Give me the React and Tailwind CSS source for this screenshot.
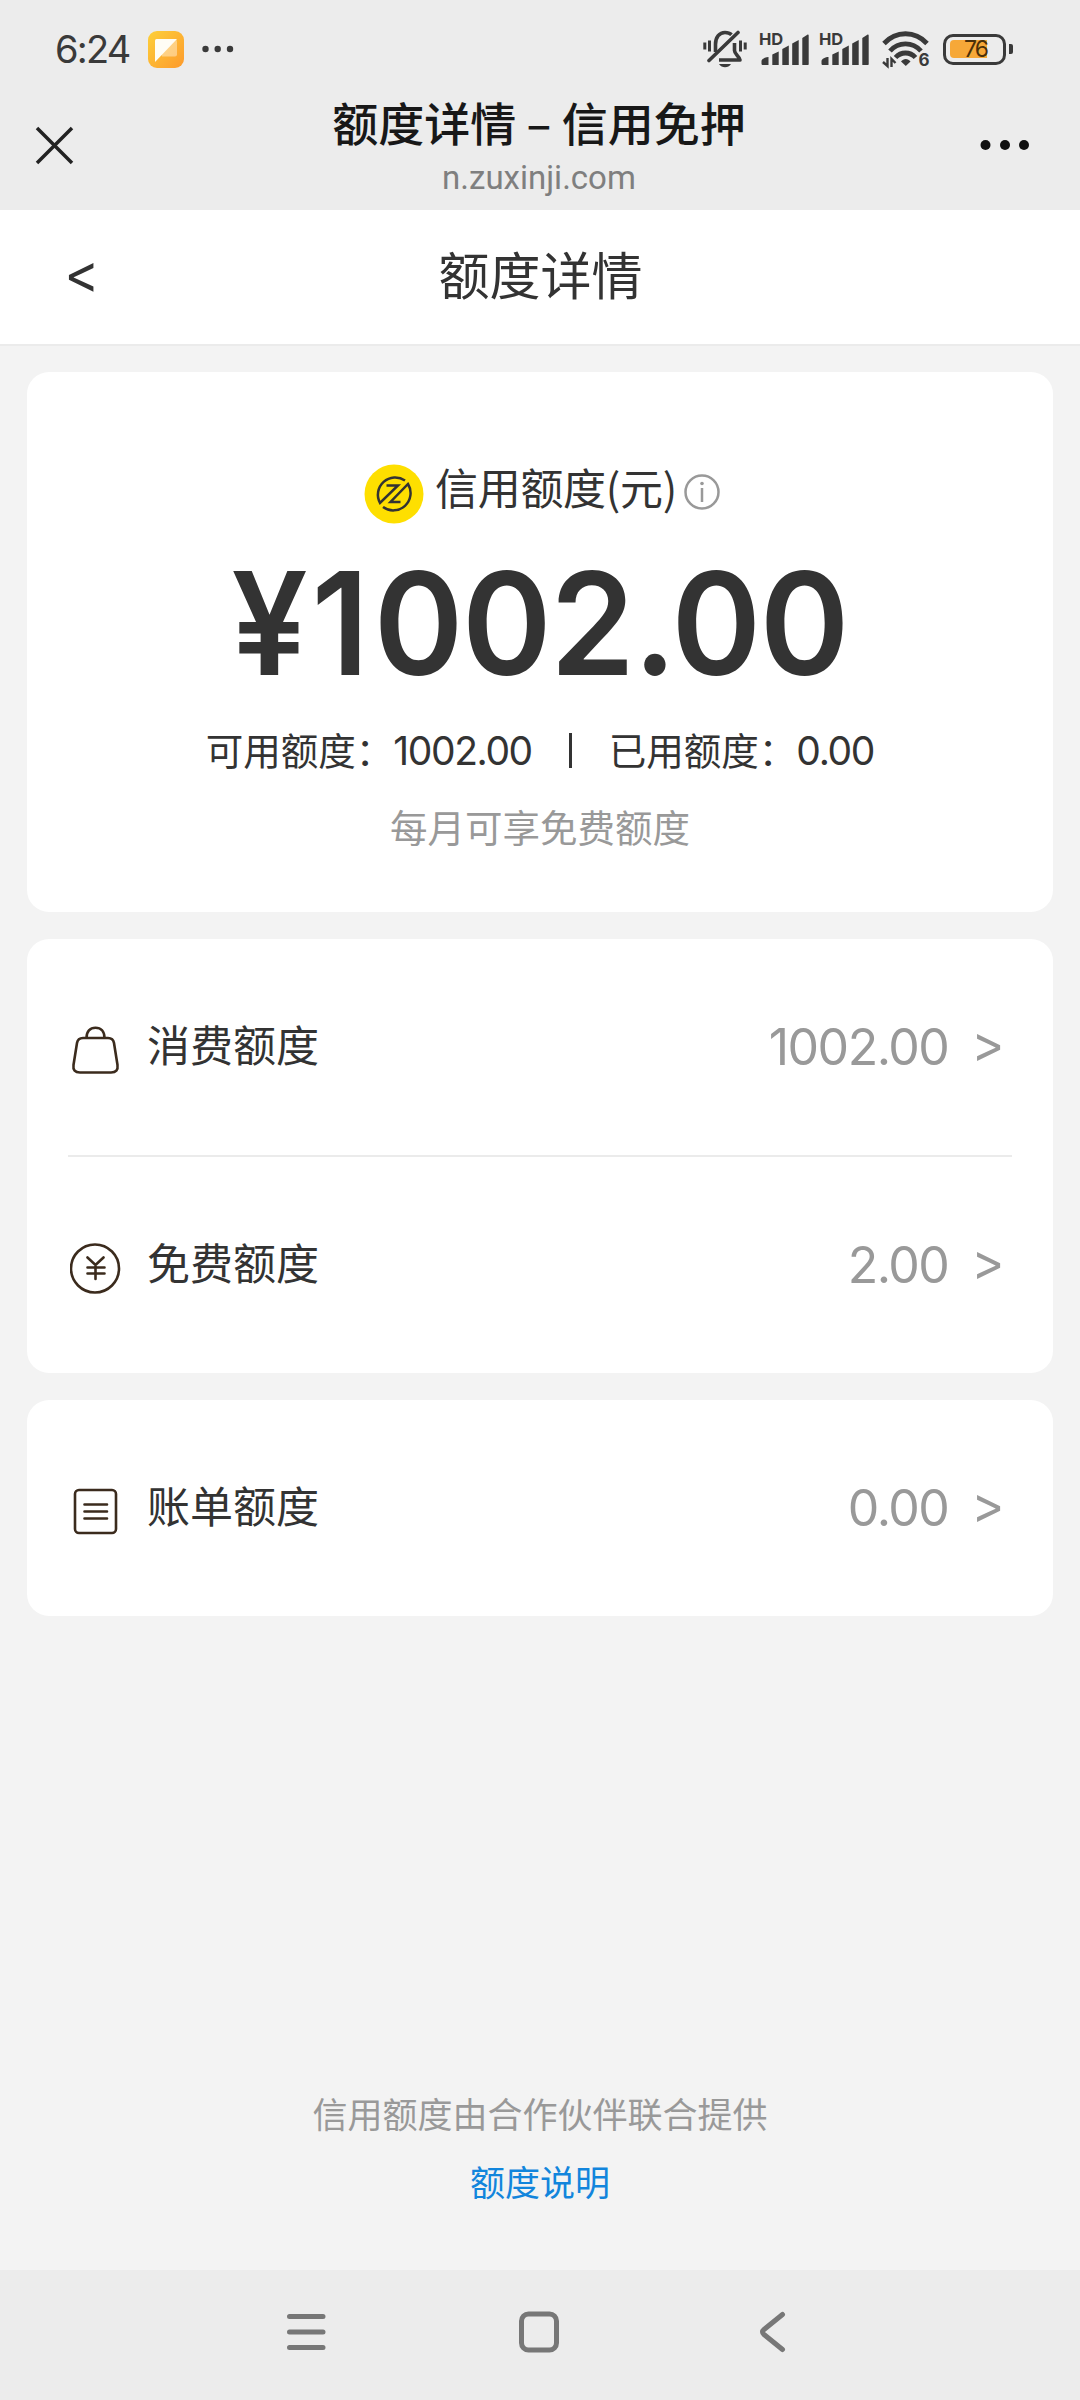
const cjk = "font-['Noto_Sans_CJK_SC',sans-serif]";
const latin = "font-['Inter','Noto_Sans_CJK_SC',sans-serif]";

function MutedBell() {
  return (
    <svg className="w-[44px] h-[38px]" viewBox="0 0 44 38" fill="none" stroke="#3a3a3a" strokeWidth="3.6">
      <path d="M12.5 22V14.5C12.5 7 16.500 2.500 22 2.500c3 0 5 .8 6.500 2.300" />
      <path d="M31.500 13v7.500c0 4 5 5.500 5.500 9.500H16" strokeLinejoin="round" />
      <path d="M6 30.500 35 2.500" strokeLinecap="round" />
      <path d="M16 34h12c-1.500 2.200-3.500 3.300-6 3.300s-4.500-1.100-6-3.300z" fill="#3a3a3a" stroke="none" />
      <path d="M1.800 12.500v7M6.500 10.500v11M37.500 10.500v11M42.200 12.500v7" strokeWidth="3" />
    </svg>
  );
}

function Signal() {
  return (
    <div className="relative w-[52px] h-[36px]">
      <span className="absolute left-0 top-[1px] text-[16.500px] leading-[14px] font-bold text-[#3a3a3a] font-['Inter',sans-serif]">
        HD
      </span>
      <svg className="w-[52px] h-[36px]" viewBox="0 0 52 36" fill="#3a3a3a">
        <path d="M2.500 30c0-2 4-4 7-4v8H4c-1 0-1.500-.5-1.500-1.500z" />
        <path d="M13.300 23.500 19.700 20.500v13.500h-6.400zM23.300 18l6.500-3.500V34h-6.500zM33.200 12.500l6.500-3.500v25h-6.500z" />
        <path d="M43.300 7l5-3.200c.9-.5 1.400 0 1.400.9V33c0 .6-.4 1-1 1h-5.400z" />
      </svg>
    </div>
  );
}

function Wifi() {
  return (
    <svg className="mt-[4px] w-[50px] h-[42px]" viewBox="0 0 50 42" fill="none" stroke="#3a3a3a" strokeWidth="4.800">
      <path d="M2 13.500C14 .5 33 .5 45 13.500" />
      <path d="M8 21c8.500-9.500 22.500-9.500 31 0" />
      <path d="M13.500 27.500c5.500-6 14.500-6 20 0" />
      <path d="M19 31.500c2.500-3.500 7-3.500 9.500 0l-4.700 4.500z" fill="#3a3a3a" stroke="none" />
      <path d="M5.500 28v8L1 32M9.500 37v-8l4 4" strokeWidth="2.400" />
      <text x="36.500" y="36" fontSize="17" fontWeight="700" fill="#3a3a3a" stroke="none" fontFamily="Inter, sans-serif">
        6
      </text>
    </svg>
  );
}

function Battery() {
  return (
    <div className="flex items-center gap-[3px]">
      <div className="flex w-[63px] h-[31px] rounded-[10px] border-[3px] border-[#3a3a3a] p-[4px]">
        <div className="flex justify-end w-[37px] h-[18px] mt-[-1px] rounded-l-[4px] bg-[#f6a838]">
          <span className="text-[23px] leading-[18px] tracking-[-2px] text-[#4a3009] font-['Inter',sans-serif]">76</span>
        </div>
      </div>
      <div className="w-[4px] h-[10px] rounded-r-[2px] bg-[#3a3a3a]" />
    </div>
  );
}

function StatusBar() {
  return (
    <div className="flex items-center h-[98px] pl-[55px] pr-[67px]">
      <span className={`w-[93px] text-[38px] leading-none tracking-[-1.8px] text-[#3a3a3a] ${latin}`}>6:24</span>
      <svg className="w-[36px] h-[37px]" viewBox="0 0 36 37">
        <defs>
          <linearGradient id="appIcon" x1="0" y1="0" x2="1" y2="1">
            <stop offset="0" stopColor="#fdd03a" />
            <stop offset="1" stopColor="#fd9a2c" />
          </linearGradient>
        </defs>
        <rect width="36" height="37" rx="9" fill="url(#appIcon)" />
        <path d="M9 8.500h18a2 2 0 0 1 2 2v13a2 2 0 0 1-2 2H14z" fill="#fff" fillOpacity=".4" />
        <path d="M7 9.500a1.500 1.500 0 0 1 1.500-1.500H29L7 31z" fill="#fffdf5" />
      </svg>
      <svg className="ml-[18px] w-[32px] h-[8px]" viewBox="0 0 32 8" fill="#3a3a3a">
        <circle cx="3.500" cy="4" r="3.200" />
        <circle cx="15.700" cy="4" r="3.200" />
        <circle cx="28" cy="4" r="3.200" />
      </svg>
      <div className="flex items-center ml-auto">
        <MutedBell />
        <div className="ml-[12px]"><Signal /></div>
        <div className="ml-[8px]"><Signal /></div>
        <div className="ml-[11px]"><Wifi /></div>
        <div className="ml-[11px]"><Battery /></div>
      </div>
    </div>
  );
}

function BrowserBar() {
  return (
    <div className="flex items-center h-[112px] pl-[35px] pr-[50px]">
      <svg className="w-[39px] h-[39px] mt-[-18px]" viewBox="0 0 39 39" stroke="#222" strokeWidth="3.500">
        <path d="M2 2l35 35M37 2 2 37" />
      </svg>
      <div className="flex flex-col items-center flex-1 h-full pl-[24px] mt-[-23px]">
        <h1 className={`text-[46px] leading-[68px] font-medium text-[#181818] whitespace-pre ${cjk}`}>额度详情 – 信用免押</h1>
        <p className="mt-[3px] text-[33px] leading-[40px] text-[#7f7f7f] font-['Roboto',sans-serif]">n.zuxinji.com</p>
      </div>
      <svg className="w-[50px] h-[12px] mt-[-18px]" viewBox="0 0 50 12" fill="#111">
        <circle cx="5.500" cy="6" r="5" />
        <circle cx="25" cy="6" r="5" />
        <circle cx="44" cy="6" r="5" />
      </svg>
    </div>
  );
}

function CreditLogo() {
  return (
    <svg className="w-[60px] h-[60px]" viewBox="0 0 60 60" fill="none" stroke="#333" strokeWidth="2.500">
      <circle cx="30" cy="30" r="29.500" fill="#fedf00" stroke="none" />
      <path d="M22.500 21.500H34L16 39A17.300 17.300 0 0 1 41 16.500" />
      <path d="M36.500 38H26.500L44 20A17.300 17.300 0 0 1 19 43" />
    </svg>
  );
}

function BagIcon() {
  return (
    <svg className="w-[52px] h-[52px]" viewBox="0 0 52 52" fill="none" stroke="#3b2b1d" strokeWidth="2.600">
      <path d="M13 14h25c3.500 0 5.500 2 6 5l3.500 22c.7 5-1.500 7.500-6.500 7.500H10c-5 0-7.200-2.500-6.500-7.500l3.500-22c.5-3 2.500-5 6-5z" />
      <path d="M16.500 14C16.500 7.500 20 3.800 25.500 3.800S34.500 7.500 34.500 14" />
    </svg>
  );
}

function YuanIcon() {
  return (
    <svg className="w-[52px] h-[52px]" viewBox="0 0 52 52" fill="none" stroke="#3b2b1d" strokeWidth="2.600">
      <circle cx="25" cy="26.500" r="24" />
      <path d="M17.500 15.500 25.500 23l8-7.500M25.500 23v14M17.500 25.500h17M17.500 31.500h17" strokeLinecap="round" />
    </svg>
  );
}

function BillIcon() {
  return (
    <svg className="w-[52px] h-[52px]" viewBox="0 0 52 52" fill="none" stroke="#3b2b1d" strokeWidth="2.600">
      <rect x="5" y="5" width="41" height="43" rx="4" />
      <path d="M14.500 19.500h22.500M14.500 26.500h22.500M14.500 33.500h22.500" strokeLinecap="round" />
    </svg>
  );
}

function QuotaRow({ icon, label, value }) {
  return (
    <div className="flex items-center h-[216px] pr-[10px]">
      <div className="ml-[2px] mt-[6px]">{icon}</div>
      <span className={`ml-[25px] text-[43px] leading-[60px] text-[#333] mt-[-8px] ${cjk}`}>{label}</span>
      <span className={`ml-auto text-[50px] leading-[60px] tracking-[-1.5px] text-[#999] ${latin}`}>{value}</span>
      <span className={`ml-[27px] text-[48px] leading-[60px] mt-[-6px] scale-y-125 text-[#999] ${cjk}`}>&gt;</span>
    </div>
  );
}

export default function App() {
  return (
    <div className="flex flex-col w-[1080px] h-[2400px] overflow-hidden bg-[#f3f3f3]">
      <header className="h-[210px] bg-[#ececec]">
        <StatusBar />
        <BrowserBar />
      </header>

      <div className="flex items-center h-[136px] shrink-0 px-[67px] bg-white border-b-2 border-[#ebebeb]">
        <span className={`w-[28px] text-[51px] leading-[70px] mt-[-8px] scale-y-125 text-[#333] ${cjk}`}>&lt;</span>
        <h2 className={`flex-1 pr-[27px] mt-[-8px] text-center text-[51px] leading-[70px] text-[#333] ${cjk}`}>额度详情</h2>
      </div>

      <main className="flex flex-col flex-1 px-[27px] pt-[26px]">
        <section className="flex flex-col items-center h-[540px] rounded-[22px] bg-white">
          <div className="flex items-center h-[60px] mt-[92px] pl-[4px]">
            <CreditLogo />
            <span className={`ml-[11px] text-[43px] leading-[60px] tracking-[-0.3px] text-[#333] mt-[-16px] ${cjk}`}>信用额度(元)</span>
            <svg className="ml-[7px] w-[36px] h-[36px] mt-[-4px]" viewBox="0 0 36 36" fill="none" stroke="#999" strokeWidth="2.500">
              <circle cx="18" cy="18" r="16.500" />
              <path d="M18 14v14" />
              <circle cx="18" cy="9.500" r="1.800" fill="#999" stroke="none" />
            </svg>
          </div>
          <div className={`mt-[14px] text-[143px] leading-[170px] font-semibold tracking-[-1.5px] scale-x-95 text-[#333] ${latin}`}>
            <span className="tracking-[4px]">¥</span>
            <span className="tracking-[5px]">1</span>002.00
          </div>
          <div className="flex items-center h-[56px] mt-[15px] text-[37.500px] text-[#333]">
            <span className={`mt-[-4px] ${cjk}`}>可用额度：</span>
            <span className={`text-[39px] tracking-[-1.4px] ${latin}`}>1002.00</span>
            <span className="w-[3px] h-[35px] mx-[37px] mt-[-1px] bg-[#333]" />
            <span className={`mt-[-4px] ${cjk}`}>已用额度：</span>
            <span className={`text-[39px] tracking-[-1.3px] ${latin}`}>0.00</span>
          </div>
          <p className={`mt-[19px] text-[37.500px] leading-[56px] text-[#999] ${cjk}`}>每月可享免费额度</p>
        </section>

        <section className="mt-[27px] h-[434px] px-[41px] rounded-[22px] bg-white">
          <QuotaRow icon={<BagIcon />} label="消费额度" value="1002.00" />
          <div className="h-[2px] bg-[#ebebeb]" />
          <QuotaRow icon={<YuanIcon />} label="免费额度" value="2.00" />
        </section>

        <section className="mt-[27px] h-[216px] px-[41px] rounded-[22px] bg-white">
          <QuotaRow icon={<BillIcon />} label="账单额度" value="0.00" />
        </section>

        <footer className={`flex flex-col items-center mt-auto mb-[55px] text-[35px] leading-[68px] ${cjk}`}>
          <p className="text-[#999]">信用额度由合作伙伴联合提供</p>
          <a className="text-[#1285dc]">额度说明</a>
        </footer>
      </main>

      <nav className="flex items-center h-[130px] shrink-0 pl-[285px] bg-[#ececec]">
        <svg className="w-[42px] h-[42px] mt-[-6px]" viewBox="0 0 42 42" stroke="#777" strokeWidth="5" strokeLinecap="round">
          <path d="M4.500 5.500h33.500M4.500 21h33.500M4.500 36.500h33.500" />
        </svg>
        <svg className="ml-[191px] w-[42px] h-[42px] mt-[-6px]" viewBox="0 0 42 42" fill="none" stroke="#777" strokeWidth="5">
          <rect x="3.500" y="3" width="35" height="36" rx="7" />
        </svg>
        <svg className="ml-[198px] w-[28px] h-[42px] mt-[-6px]" viewBox="0 0 28 42" fill="none" stroke="#777" strokeWidth="5" strokeLinecap="round">
          <path d="M24.500 3.500 6 18.500c-2 1.700-2 3.300 0 5l18.500 15" />
        </svg>
      </nav>
    </div>
  );
}
